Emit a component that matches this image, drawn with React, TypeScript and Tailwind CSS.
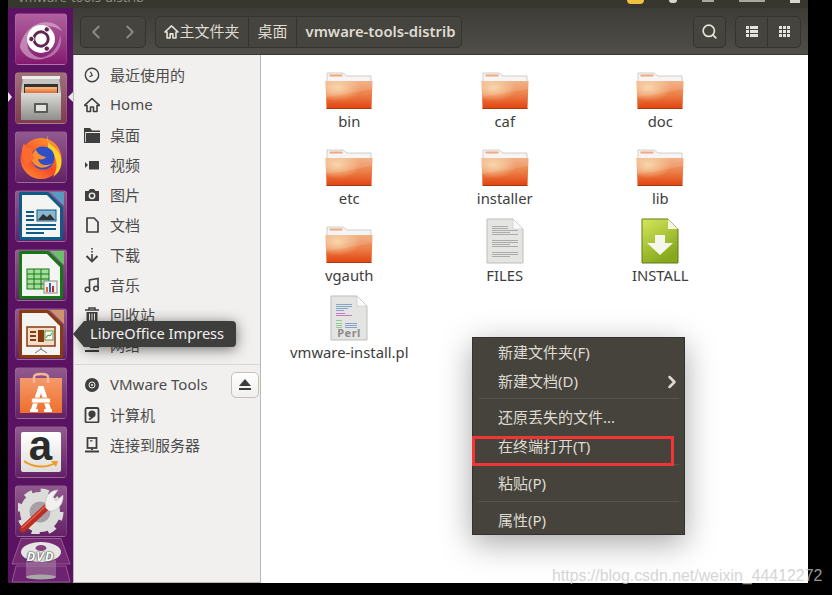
import type { ReactNode } from 'react';
import { ChevronLeft, ChevronRight, Search } from 'lucide-react';

const FONT = '"Noto Sans", "Noto Sans CJK SC", sans-serif';

function Tile({ children, tone = 'plain' }: { children: ReactNode; tone?: 'plain' | 'active' | 'ubuntu' }) {
  const bg =
    tone === 'active'
      ? 'from-[#a0707e] to-[#7e3a4e]'
      : tone === 'ubuntu'
        ? 'from-[#b0609f] to-[#84186f]'
        : 'from-[#915a8e] to-[#642166]';
  return (
    <div className={`relative flex h-[52px] w-[52px] items-center justify-center overflow-hidden rounded-[4px] border border-[#ffffff1a] bg-gradient-to-b ${bg}`}>
      {children}
    </div>
  );
}

function UbuntuLogo() {
  return (
    <svg width="52" height="52" viewBox="0 0 52 52">
      <path d="M4 34C10 6 40 2 48 18C36 8 16 12 12 30C11 38 18 46 30 46C18 50 7 44 4 34Z" fill="#e8c4de" opacity="0.55" />
      <path d="M46 22C50 36 38 48 24 46C36 44 44 36 46 22Z" fill="#e8c4de" opacity="0.45" />
      <circle cx="26" cy="26" r="14.5" fill="#fff" />
      <circle cx="26" cy="26" r="7.5" fill="none" stroke="#5e2750" strokeWidth="3" />
      <circle cx="32" cy="16" r="2.8" fill="#5e2750" stroke="#fff" />
      <circle cx="32" cy="36" r="2.8" fill="#5e2750" stroke="#fff" />
      <circle cx="16" cy="26" r="2.8" fill="#5e2750" stroke="#fff" />
    </svg>
  );
}

function CabinetIcon() {
  return (
    <svg width="42" height="44" viewBox="0 0 42 44">
      <defs>
        <linearGradient id="cabinetBody" x1="0" y1="0" x2="0" y2="1">
          <stop offset="0" stopColor="#dcdcd8" />
          <stop offset="1" stopColor="#8e8e8a" />
        </linearGradient>
      </defs>
      <path d="M3 0H39L41 17V44H1V17Z" fill="#c4c4c0" />
      <rect x="2" y="0" width="38" height="3" fill="#ecece8" />
      <rect x="4" y="8" width="34" height="10" fill="#35342f" />
      <rect x="5" y="11" width="32" height="2" fill="#f2b27a" />
      <rect x="5" y="13" width="32" height="2" fill="#ef9450" />
      <rect x="5" y="15" width="32" height="3" fill="#e5764a" />
      <rect x="1" y="17" width="40" height="27" fill="url(#cabinetBody)" />
      <rect x="14" y="27" width="14" height="10" rx="1" fill="#5a5954" />
      <rect x="16" y="29" width="10" height="6" fill="#e2e2de" />
    </svg>
  );
}

function FirefoxIcon() {
  return (
    <svg width="46" height="46" viewBox="0 0 46 46">
      <defs>
        <linearGradient id="foxBody" x1="0.8" y1="0" x2="0.2" y2="1">
          <stop offset="0" stopColor="#ff9a2e" />
          <stop offset="0.6" stopColor="#f4482b" />
          <stop offset="1" stopColor="#ff8a2e" />
        </linearGradient>
      </defs>
      <circle cx="23" cy="24.5" r="20.5" fill="url(#foxBody)" />
      <path d="M30 1C28 8 32 10 37 14C46 22 46 36 35 43C42 32 38 20 30 17Z" fill="#ffd02e" />
      <circle cx="25" cy="24" r="11.5" fill="#2f4fc8" />
      <path d="M13 22C13 33 26 38 35 29C28 33 21 31 20 25C24 26 27 25 28 23C23 22 18 19 18 15Z" fill="#ff8f2e" />
      <path d="M6 9C7 13 11 15 16 14C13 18 14 21 17 24L8 31C3 24 3 15 6 9Z" fill="#ff6a2e" />
    </svg>
  );
}

function OfficeDoc({ edge, corner, children }: { edge: string; corner: string; children: ReactNode }) {
  return (
    <svg width="46" height="48" viewBox="0 0 46 48">
      <path d="M32 0H46V14Z" fill={corner} />
      <path d="M2.5 1.5H29.5L43.5 15.5V46.5H2.5Z" fill="#f4f4f2" stroke={edge} strokeWidth="3" strokeLinejoin="round" />
      {children}
    </svg>
  );
}

function WriterIcon() {
  return (
    <OfficeDoc edge="#0f5a86" corner="#5a9ac0">
      <g fill="#0f5a86">
        <rect x="8" y="19" width="8" height="2" />
        <rect x="8" y="23" width="8" height="2" />
        <rect x="8" y="27" width="8" height="2" />
        <rect x="8" y="32" width="30" height="2" />
        <rect x="8" y="36" width="30" height="2" />
        <rect x="8" y="40" width="18" height="2" />
      </g>
      <rect x="19" y="18" width="19" height="11" fill="#8ab8d2" stroke="#0f5a86" />
      <path d="M20 28L25 22L29 25L32 22L37 28Z" fill="#333" />
    </OfficeDoc>
  );
}

function CalcIcon() {
  return (
    <OfficeDoc edge="#127a12" corner="#6cc06c">
      <rect x="9" y="18" width="22" height="20" fill="#a6dc9c" stroke="#127a12" />
      <path d="M9 23H31M9 28H31M9 33H31M16 18V38M23 18V38" stroke="#127a12" fill="none" />
      <rect x="26" y="30" width="13" height="12" fill="#f0f0ee" stroke="#888" />
      <rect x="28" y="36" width="2" height="5" fill="#e06a1e" />
      <rect x="31" y="32" width="2" height="9" fill="#2a6ab4" />
      <rect x="34" y="35" width="2" height="6" fill="#c22" />
    </OfficeDoc>
  );
}

function ImpressIcon() {
  return (
    <OfficeDoc edge="#8a3a10" corner="#d0926a">
      <rect x="9" y="17" width="28" height="19" fill="#f3ddc8" stroke="#8a3a10" strokeWidth="1.5" />
      <rect x="12" y="21" width="6" height="2" fill="#8a3a10" />
      <rect x="12" y="25" width="6" height="2" fill="#8a3a10" />
      <rect x="12" y="29" width="6" height="2" fill="#8a3a10" />
      <rect x="20" y="20" width="6" height="12" fill="#8a3a10" />
      <rect x="27" y="21" width="8" height="9" fill="#fff" stroke="#5a9a3a" />
      <path d="M28 28L30 25L32 26L34 23" stroke="#3a8a3a" fill="none" />
      <path d="M23 36V40M23 39L17 43M23 39L29 43" stroke="#777" fill="none" />
    </OfficeDoc>
  );
}

function SoftwareIcon() {
  return (
    <svg width="42" height="42" viewBox="0 0 42 42">
      <defs>
        <linearGradient id="bagFace" x1="0" y1="0" x2="0" y2="1">
          <stop offset="0" stopColor="#f49a6c" />
          <stop offset="1" stopColor="#ef6f2a" />
        </linearGradient>
      </defs>
      <path d="M0 6H42V41H0Z" fill="url(#bagFace)" />
      <path d="M14 11V5C14 1 28 1 28 5V11" fill="none" stroke="#f6b594" strokeWidth="2.5" />
      <path d="M18.5 14H23.5L31 37H26L21 21L16 37H11Z" fill="#fff" />
      <rect x="11.5" y="26" width="19" height="5" rx="1.5" fill="#fff" stroke="#ef7b3a" strokeWidth="0.8" />
      <path d="M10 37H18V40H10ZM24 37H32V40H24Z" fill="#fff" />
    </svg>
  );
}

function AmazonIcon() {
  return (
    <div className="relative flex h-10 w-10 justify-center rounded-[2px] bg-gradient-to-b from-white to-[#dededc]">
      <span className="h-[28px] text-[42px] leading-[28px] font-bold text-[#2b2b2b]" style={{ fontFamily: 'Liberation Sans, sans-serif' }}>
        a
      </span>
      <svg className="absolute bottom-[3px] left-[2px]" width="36" height="10" viewBox="0 0 36 10">
        <path d="M1 2C10 9 24 9 32 4" fill="none" stroke="#f29a1f" strokeWidth="2" />
        <path d="M28 2L35 2L33 8Z" fill="#f29a1f" />
      </svg>
    </div>
  );
}

function SettingsIcon() {
  return (
    <svg width="46" height="46" viewBox="0 0 46 46">
      <circle cx="22" cy="24" r="15" fill="none" stroke="#dcdcda" strokeWidth="10" />
      <circle cx="22" cy="24" r="21" fill="none" stroke="#dcdcda" strokeWidth="5" strokeDasharray="8 8.5" />
      <circle cx="22" cy="24" r="10.5" fill="#a8a0a6" />
      <path d="M5 41L32 16" stroke="#b92e25" strokeWidth="6.5" strokeLinecap="round" />
      <path d="M4.5 39.5L31 15" stroke="#e8604f" strokeWidth="1.5" strokeLinecap="round" />
      <path d="M28 20C25 11 31 2 40 2L35 9L38 13L45 7C46 17 38 24 31 23Z" fill="#f0f0ee" stroke="#bcbcba" strokeWidth="0.6" />
    </svg>
  );
}

function DvdIcon() {
  return (
    <div className="relative h-[45px] w-[60px]">
      <svg className="absolute inset-0" width="60" height="45" viewBox="0 0 60 45">
        <path d="M10 0.5H50L59 26H1Z" fill="#752a74" stroke="#945a92" />
        <path d="M5 28H55L59 44H1Z" fill="#6c2270" stroke="#945a92" />
        <rect x="15" y="22" width="30" height="17" fill="#b899b4" opacity="0.45" />
        <ellipse cx="30" cy="39" rx="15" ry="2.5" fill="#a8a8a6" />
        <ellipse cx="30" cy="14" rx="20" ry="10" fill="#e6e6e4" />
        <ellipse cx="30" cy="10" rx="5.5" ry="3" fill="#8a3f80" />
      </svg>
      <span
        className="absolute top-[12px] right-0 left-0 text-center text-[13px] leading-none font-bold text-white italic"
        style={{ textShadow: '0 0 2px #222, 0 0 1px #222', letterSpacing: 1 }}
      >
        DVD
      </span>
    </div>
  );
}

function Launcher() {
  return (
    <div className="relative flex w-[65px] shrink-0 flex-col items-center gap-[7px] bg-[#5a1262] pt-[5px]">
      <Tile tone="ubuntu"><UbuntuLogo /></Tile>
      <Tile tone="active"><CabinetIcon /></Tile>
      <Tile><FirefoxIcon /></Tile>
      <Tile><WriterIcon /></Tile>
      <Tile><CalcIcon /></Tile>
      <Tile><ImpressIcon /></Tile>
      <Tile><SoftwareIcon /></Tile>
      <Tile><AmazonIcon /></Tile>
      <Tile><SettingsIcon /></Tile>
      <div className="mt-[-6px] flex justify-center"><DvdIcon /></div>
      <span className="absolute top-[84px] left-0 h-0 w-0 border-y-[5px] border-l-[4px] border-y-transparent border-l-[#e8e8e8]" />
      <span className="absolute top-[84px] right-0 h-0 w-0 border-y-[5px] border-r-[5px] border-y-transparent border-r-[#e8e8e8]" />
    </div>
  );
}

function SideIcon({ name }: { name: string }) {
  const c = '#3f3f3f';
  const common = { width: 16, height: 16, viewBox: '0 0 16 16' };
  switch (name) {
    case 'clock':
      return <svg {...common}><circle cx="8" cy="8" r="6.7" fill="none" stroke={c} strokeWidth="1.4" /><path d="M8 4.5V8.5L5 8.5" transform="rotate(-25 8 8)" fill="none" stroke={c} strokeWidth="1.2" /></svg>;
    case 'home':
      return <svg {...common}><path d="M8 1.5L0.5 8.5H3V14.5H6.5V10H9.5V14.5H13V8.5H15.5Z" fill="none" stroke={c} strokeWidth="1.6" strokeLinejoin="round" /></svg>;
    case 'folder':
      return <svg {...common}><path d="M0 1H6L8 3.5H16V16H0Z" fill={c} /><path d="M2 5.5H16" stroke="#f1f0ee" /><path d="M1.5 5V15" stroke="#f1f0ee" strokeWidth="0.8" /></svg>;
    case 'video':
      return <svg {...common}><path d="M1 5L4 8L1 11Z" fill={c} /><rect x="5" y="4" width="10" height="8.5" fill={c} /></svg>;
    case 'camera':
      return <svg {...common}><path d="M1 4H4.5L6 2H10L11.5 4H15V14H1Z" fill={c} /><circle cx="8" cy="8.8" r="3.4" fill="#f1f0ee" /><circle cx="8" cy="8.8" r="2" fill={c} /></svg>;
    case 'doc':
      return <svg {...common}><path d="M3 1H10L14 5V15H3Z" fill="none" stroke={c} strokeWidth="1.7" strokeLinejoin="round" /></svg>;
    case 'download':
      return <svg {...common}><path d="M8 1V2.5M8 4V5.5M8 7V13" stroke={c} strokeWidth="1.6" fill="none" /><path d="M2.5 9L8 14.5L13.5 9" stroke={c} strokeWidth="1.8" fill="none" /></svg>;
    case 'music':
      return <svg {...common}><path d="M5.5 12V3L14 1.5V11" stroke={c} strokeWidth="1.6" fill="none" /><circle cx="3.5" cy="12.5" r="2.3" fill="none" stroke={c} strokeWidth="1.5" /><circle cx="12" cy="11.5" r="2.3" fill="none" stroke={c} strokeWidth="1.5" /></svg>;
    case 'trash':
      return <svg {...common}><path d="M1 3H15M5 3V1H11V3" stroke={c} strokeWidth="1.5" fill="none" /><path d="M2.5 5H13.5V15H2.5Z" fill={c} /><path d="M5.5 6.5V13.5M8 6.5V13.5M10.5 6.5V13.5" stroke="#f1f0ee" /></svg>;
    case 'network':
      return <svg {...common}><rect x="1" y="2" width="11" height="8" fill={c} /><rect x="6" y="5" width="9" height="6" fill={c} /><path d="M1 14H15" stroke={c} strokeWidth="2" /></svg>;
    case 'disc':
      return <svg {...common}><circle cx="8" cy="8" r="7" fill={c} /><circle cx="8" cy="8" r="3" fill="none" stroke="#f1f0ee" /><circle cx="8" cy="8" r="1" fill="#f1f0ee" /></svg>;
    case 'drive':
      return <svg {...common}><rect x="1.5" y="1" width="13" height="14.5" rx="1.5" fill="none" stroke={c} strokeWidth="1.8" /><circle cx="8" cy="7" r="3.6" fill={c} /><path d="M5 12.5L9 10" stroke={c} strokeWidth="1.6" /></svg>;
    default:
      return <svg {...common}><rect x="3.5" y="1" width="9" height="10" fill="none" stroke={c} strokeWidth="1.8" /><rect x="6" y="3.2" width="2.5" height="1.2" fill={c} /><path d="M8 11V13M1 14.5H15" stroke={c} strokeWidth="1.8" /></svg>;
  }
}

function SideRow({ icon, label, children }: { icon: string; label: string; children?: ReactNode }) {
  // Latin labels sit a pixel lower than the CJK ones in this font stack
  const latin = /^[A-Z]/.test(label);
  return (
    <div className="flex h-[30px] items-center text-[15px] text-[#4c4c4c]">
      <span className="flex w-[36px] shrink-0 justify-center"><SideIcon name={icon} /></span>
      <span className={latin ? 'mt-[-1px] flex-1' : 'flex-1'}>{label}</span>
      {children}
    </div>
  );
}

function Sidebar() {
  const places: [string, string][] = [
    ['clock', '最近使用的'],
    ['home', 'Home'],
    ['folder', '桌面'],
    ['video', '视频'],
    ['camera', '图片'],
    ['doc', '文档'],
    ['download', '下载'],
    ['music', '音乐'],
    ['trash', '回收站'],
    ['network', '网络'],
  ];
  return (
    <div className="flex w-[188px] shrink-0 flex-col border-r border-b border-l border-[#b8b8b4] bg-[#f1f0ee] pt-[5px]">
      {places.map(([icon, label]) => <SideRow key={label} icon={icon} label={label} />)}
      <div className="mt-[4px] mb-[5px] h-px bg-[#d8d7d4]" />
      <SideRow icon="disc" label="VMware Tools">
        <span className="mr-px flex h-[26px] w-[28px] items-center justify-center rounded-[5px] border border-[#c2c1bc] bg-gradient-to-b from-white to-[#f0efed]">
          <svg width="14" height="12" viewBox="0 0 14 12"><path d="M7 0L13 7H1Z" fill="#3c3c3c" /><rect x="1" y="9" width="12" height="2" fill="#3c3c3c" /></svg>
        </span>
      </SideRow>
      <SideRow icon="drive" label="计算机" />
      <SideRow icon="server" label="连接到服务器" />
    </div>
  );
}

function FolderIcon() {
  return (
    <svg width="48" height="38" viewBox="0 0 48 38">
      <defs>
        <linearGradient id="folderFace" x1="0" y1="0" x2="0" y2="1">
          <stop offset="0" stopColor="#f0a878" />
          <stop offset="0.5" stopColor="#ec7f48" />
          <stop offset="1" stopColor="#e2430f" />
        </linearGradient>
        <radialGradient id="folderGlow" cx="0.25" cy="0.25" r="0.5">
          <stop offset="0" stopColor="#f8d8a8" stopOpacity="0.9" />
          <stop offset="1" stopColor="#f8d8a8" stopOpacity="0" />
        </radialGradient>
      </defs>
      <path d="M2 1H18L22 4H46V10H2Z" fill="#f6f5f3" stroke="#c4c3c0" strokeWidth="0.8" />
      <rect x="4.5" y="2.5" width="13" height="2" fill="#f1a67c" />
      <path d="M0.5 9H47.5L46.5 36.5H1.5Z" fill="url(#folderFace)" />
      <path d="M0.5 9H47.5L46.5 36.5H1.5Z" fill="url(#folderGlow)" />
      <path d="M1 25C14 23 32 20 47 17V9H1Z" fill="#fff" opacity="0.12" />
      <path d="M1.5 36.5H46.5" stroke="#a83c14" strokeWidth="1.2" />
    </svg>
  );
}

function PlainDoc({ children, h = 46 }: { children?: ReactNode; h?: number }) {
  return (
    <svg width="38" height={h} viewBox="0 0 38 46">
      <path d="M1 1H27L37 11V45H1Z" fill="#e4e4e2" stroke="#bdbdbb" />
      <path d="M27 1V11H37Z" fill="#fafafa" stroke="#c8c8c6" strokeWidth="0.6" />
      {children}
    </svg>
  );
}

function TextDoc() {
  const rows = [8, 10, 12, 14, 16, 22, 24, 26, 28, 34, 36, 38];
  return (
    <PlainDoc>
      {rows.map((y, i) => (
        <rect key={y} x="6" y={y} width={i % 4 === 3 ? 18 : y < 12 ? 16 : 26} height="0.9" fill="#a4a4a2" />
      ))}
    </PlainDoc>
  );
}

function InstallDoc() {
  return (
    <svg width="38" height="46" viewBox="0 0 38 46">
      <defs>
        <linearGradient id="installFace" x1="0" y1="0" x2="0.5" y2="1">
          <stop offset="0" stopColor="#d6e65c" />
          <stop offset="1" stopColor="#86a81c" />
        </linearGradient>
      </defs>
      <path d="M1 1H27L37 11V45H1Z" fill="url(#installFace)" stroke="#5f7e12" />
      <path d="M27 1V11H37Z" fill="#f4f6e0" />
      <path d="M14 17H24V25H32L19 37L6 25H14Z" fill="#f6f7ec" />
    </svg>
  );
}

function PerlDoc() {
  return (
    <div className="relative h-[46px] w-[38px]">
      <PlainDoc>
        <g fill="#7a9cc8">
          <rect x="6" y="9" width="16" height="0.9" />
          <rect x="6" y="11" width="16" height="0.9" />
          <rect x="6" y="13" width="12" height="0.9" />
          <rect x="6" y="15" width="8" height="0.9" />
        </g>
        <rect x="6" y="18" width="9" height="0.9" fill="#c46ac0" />
        <rect x="6" y="20" width="16" height="0.9" fill="#c46ac0" />
        <g fill="#8cc88c">
          <rect x="6" y="25" width="6" height="0.9" />
          <rect x="6" y="28" width="6" height="0.9" />
          <rect x="6" y="30" width="6" height="0.9" />
          <rect x="6" y="32" width="6" height="0.9" />
        </g>
        <g fill="#7a9cc8">
          <rect x="15" y="28" width="12" height="0.9" />
          <rect x="15" y="30" width="12" height="0.9" />
          <rect x="15" y="32" width="12" height="0.9" />
        </g>
      </PlainDoc>
      <span className="absolute bottom-[2px] left-[7px] text-[11px] leading-[12px] font-bold tracking-[0.5px] text-[#8c8c8a]">Perl</span>
    </div>
  );
}

const FILES: { name: string; icon: ReactNode }[] = [
  { name: 'bin', icon: <FolderIcon /> },
  { name: 'caf', icon: <FolderIcon /> },
  { name: 'doc', icon: <FolderIcon /> },
  { name: 'etc', icon: <FolderIcon /> },
  { name: 'installer', icon: <FolderIcon /> },
  { name: 'lib', icon: <FolderIcon /> },
  { name: 'vgauth', icon: <FolderIcon /> },
  { name: 'FILES', icon: <TextDoc /> },
  { name: 'INSTALL', icon: <InstallDoc /> },
  { name: 'vmware-install.pl', icon: <PerlDoc /> },
];

function FileGrid() {
  return (
    <div className="grid flex-1 grid-cols-[155.5px_155.5px_155.5px] content-start auto-rows-[77px] bg-white pt-[17px] pl-[10.5px]">
      {FILES.map((f) => (
        <div key={f.name} className="flex flex-col items-center">
          <div className="flex h-[38px] items-end">{f.icon}</div>
          <span className="mt-[1px] text-[14.8px] leading-[20px] text-[#3d3d3d]">{f.name}</span>
        </div>
      ))}
    </div>
  );
}

function HeaderButton({ className, children }: { className?: string; children: ReactNode }) {
  return (
    <div className={`flex h-[32px] items-center justify-center border border-[#34332e] bg-[#45443e] ${className ?? ''}`}>
      {children}
    </div>
  );
}

function Header() {
  return (
    <div className="flex h-[47px] shrink-0 items-center border-b border-[#3a3934] bg-gradient-to-b from-[#3d3c37] to-[#504e48] pt-px pr-[7px] pl-[7px] text-[15px] text-[#dfdbd2]">
      <HeaderButton className="w-[66px] gap-[12px] rounded-[5px]">
        <ChevronLeft size={22} strokeWidth={2} color="#8d8b84" />
        <ChevronRight size={22} strokeWidth={2} color="#8d8b84" />
      </HeaderButton>
      <div className="ml-[9px] flex">
        <HeaderButton className="w-[94px] rounded-l-[5px]">
          <svg width="15" height="14" viewBox="0 0 16 15"><path d="M8 1L1 7.5H3.2V14H6.5V9.5H9.5V14H12.8V7.5H15Z" fill="none" stroke="#e6e2d9" strokeWidth="1.7" strokeLinejoin="round" /></svg>
          <span>主文件夹</span>
        </HeaderButton>
        <HeaderButton className="w-[48px] border-l-0">桌面</HeaderButton>
        <HeaderButton className="w-[165px] rounded-r-[5px] border-l-0 bg-[#3f3e38] pl-[3px] text-[14.8px] font-semibold">vmware-tools-distrib</HeaderButton>
      </div>
      <div className="flex-1" />
      <HeaderButton className="w-[33px] rounded-[5px]"><Search size={17} strokeWidth={2.4} color="#e6e2d9" /></HeaderButton>
      <div className="ml-[9px] flex">
        <HeaderButton className="w-[33px] rounded-l-[5px]">
          <svg width="12" height="11" viewBox="0 0 12 11" fill="#e6e2d9">
            <path d="M0 0H3V3H0ZM4 0H12V3H4ZM0 4H3V7H0ZM4 4H12V7H4ZM0 8H3V11H0ZM4 8H12V11H4Z" />
          </svg>
        </HeaderButton>
        <HeaderButton className="w-[33px] rounded-r-[5px] border-l-0 bg-[#3f3e38]">
          <svg width="11" height="11" viewBox="0 0 11 11" fill="#e6e2d9">
            <path d="M0 0H3V3H0ZM4 0H7V3H4ZM8 0H11V3H8ZM0 4H3V7H0ZM4 4H7V7H4ZM8 4H11V7H8ZM0 8H3V11H0ZM4 8H7V11H4ZM8 8H11V11H8Z" />
          </svg>
        </HeaderButton>
      </div>
    </div>
  );
}

function ContextMenu() {
  const row = 'flex h-[29px] shrink-0 items-center pl-[25px]';
  return (
    <div className="absolute top-[337px] left-[472px] flex h-[198px] w-[213px] flex-col overflow-hidden border border-[#33322d] bg-[#45433c] text-[15px] text-[#dfdbd2] shadow-[0_8px_30px_rgba(0,0,0,0.35)]">
      <div className={row}>新建文件夹(F)</div>
      <div className={`${row} justify-between pr-[2px]`}>
        新建文档(D)
        <ChevronRight size={20} strokeWidth={3} color="#dfdbd2" />
      </div>
      <div className="mx-[5px] mt-[2px] mb-[4px] h-px shrink-0 bg-[#55534c]" />
      <div className={row}>还原丢失的文件...</div>
      <div className={row}>在终端打开(T)</div>
      <div className="mx-[5px] mt-[3px] mb-[4px] h-px shrink-0 bg-[#55534c]" />
      <div className={row}>粘贴(P)</div>
      <div className="mx-[5px] mt-[3px] mb-[4px] h-px shrink-0 bg-[#55534c]" />
      <div className={row}>属性(P)</div>
    </div>
  );
}

export default function App() {
  return (
    <div className="relative flex h-[595px] w-[832px] overflow-hidden bg-black" style={{ fontFamily: FONT }}>
      <div className="ml-[8px] flex h-[583px] w-[800px] flex-col">
        <div className="flex h-[8px] shrink-0 items-start justify-between overflow-hidden bg-[#37362f] pr-[8px] pl-[10px]">
          <span className="mt-[-10px] text-[13px] leading-[14px] text-[#8f8c83]">vmware-tools-distrib</span>
          <div className="flex items-start gap-[25px]">
            <span className="h-[4px] w-[17px] rounded-b-full bg-[#f0c040]" />
            <span className="h-[3px] w-[8px] rounded-b-full bg-[#d8d6d0]" />
            <span className="h-[2px] w-[12px] bg-[#a8a69e]" />
            <span className="h-[2px] w-[26px] bg-[#a8a69e]" />
            <span className="h-[3px] w-[10px] bg-[#d8d6d0]" />
          </div>
        </div>
        <div className="flex min-h-0 flex-1">
          <Launcher />
          <div className="flex min-w-0 flex-1 flex-col">
            <Header />
            <div className="flex min-h-0 flex-1">
              <Sidebar />
              <FileGrid />
            </div>
          </div>
        </div>
      </div>

      <ContextMenu />

      {/* tooltip over the launcher */}
      <div className="absolute top-[321px] left-[84px] flex h-[26px] w-[152px] items-center rounded-r-[4px] bg-[#3e3e3c] pl-[6px] text-[14.6px] text-[#f2f2f2] shadow-[0_2px_14px_rgba(0,0,0,0.55)]">
        LibreOffice Impress
        <span className="absolute top-0 left-[-11px] h-0 w-0 border-y-[13px] border-r-[11px] border-y-transparent border-r-[#3e3e3c]" />
      </div>

      {/* red annotation box */}
      <div className="absolute top-[436px] left-[472px] h-[30px] w-[202px] border-[3px] border-[#f23434]" />

      <div className="absolute top-[565px] left-[552px] text-[15.9px] leading-[22px] text-[#c8c8c8] opacity-75" style={{ fontFamily: 'Liberation Sans, sans-serif' }}>
        https://blog.csdn.net/weixin_44412272
      </div>
    </div>
  );
}
